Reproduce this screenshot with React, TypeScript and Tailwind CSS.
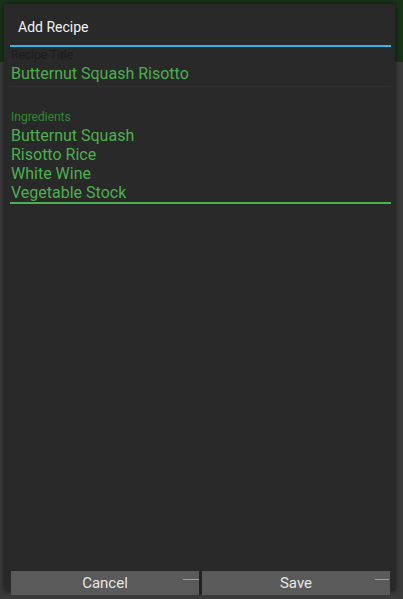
import React from "react";

export default function App() {
  const ingredients = ["Butternut Squash", "Risotto Rice", "White Wine", "Vegetable Stock"];
  return (
    <div
      className="relative w-[403px] h-[599px] overflow-hidden bg-[#3c3c3c]"
      style={{ fontFamily: "Roboto, 'Noto Sans', sans-serif" }}
    >
      <div className="h-[62px] bg-[#1a341a]" />
      <div className="absolute left-[4px] top-[4px] w-[391px] h-[587px] bg-[#292929] shadow-[0_0_6px_rgba(0,0,0,0.6)] flex flex-col">
        <div className="pt-[13px] pl-[14px] text-[14px] leading-[20px] text-[#f2f2f2]">Add Recipe</div>
        <div className="mt-[8px] ml-[6px] mr-[4px] h-[2px] bg-[#33b5e5]" />
        <div className="mt-[1px] ml-[7px] text-[12px] leading-[14px] text-[#1c1c1c]">Recipe Title</div>
        <div className="mt-[1px] ml-[7px] text-[16px] leading-[21px] text-[#4caf50]">Butternut Squash Risotto</div>
        <div className="mt-[2px] ml-[6px] mr-[4px] h-[1px] bg-[#2e2e2e]" />
        <div className="mt-[23px] ml-[7px] text-[12px] leading-[14px] text-[#2f8a33]">Ingredients</div>
        <div className="mt-[2px] ml-[7px] flex flex-col text-[16px] leading-[19px] text-[#4caf50]">
          {ingredients.map((i) => (
            <div key={i}>{i}</div>
          ))}
        </div>
        <div className="ml-[6px] mr-[4px] h-[2px] bg-[#4caf50]" />
        <div className="flex-1" />
        <div className="-mb-[4px] ml-[7px] mr-[5px] flex gap-[3px] bg-[#222222]">
          <button className="relative flex-1 h-[24px] bg-[#5a5a5a] text-[15px] text-[#e6e6e6] leading-[24px]">
            Cancel
            <span className="absolute right-0 top-[8px] w-[16px] h-[1px] bg-[#a0a0a0]" />
          </button>
          <button className="relative flex-1 h-[24px] bg-[#5a5a5a] text-[15px] text-[#e6e6e6] leading-[24px]">
            Save
            <span className="absolute right-[1px] top-[8px] w-[14px] h-[1px] bg-[#a0a0a0]" />
          </button>
        </div>
      </div>
    </div>
  );
}
